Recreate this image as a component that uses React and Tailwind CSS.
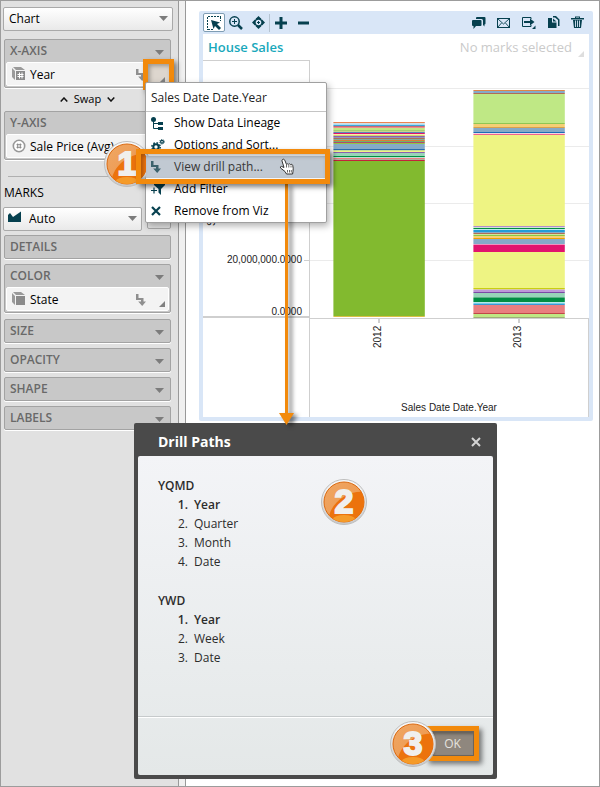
import React from 'react';

const INK = '#06404f';

function Caret({ className = '' }) {
  return (
    <svg className={`pointer-events-none ${className}`} width="9" height="5" viewBox="0 0 9 5" aria-hidden="true">
      <path d="M0 0h9L4.5 5z" fill="#7c7c7c" />
    </svg>
  );
}

function Corner({ className = '', fill = '#808080' }) {
  return (
    <svg className={className} width="6" height="6" viewBox="0 0 6 6" aria-hidden="true">
      <path d="M6 0v6H0z" fill={fill} />
    </svg>
  );
}

function CubeIcon({ hash }) {
  return (
    <svg width="14" height="14" viewBox="0 0 14 14" aria-hidden="true">
      <path d="M0 1l3 3v9L0 10zM1 0h8l4 3H4z" fill="#9a9a9a" />
      <rect x="4" y="4" width="9" height="9" fill="#8b8b8b" />
      {hash && <path d="M7.500 5.500v6M10 5.500v6M5.500 7.500h6M5.500 9.500h6" stroke="#fff" strokeWidth="1" />}
    </svg>
  );
}

function DrillIcon({ color = '#8f8f8f' }) {
  return (
    <svg width="10" height="12" viewBox="0 0 10 12" aria-hidden="true">
      <path d="M0 0h2.500v4H7.500v3.500H10L6.200 12 2.200 7.500H5v-1.500H0z" fill={color} />
    </svg>
  );
}

function Panel({ title, caret = true, children }) {
  return (
    <section className="rounded-xs border border-[#a3a3a3] bg-[#c8c8c8] shadow-[0_1px_0_#fff]">
      <header className="flex h-[22px] items-center justify-between pr-1.5 pl-[5px] text-[12px] leading-[22px] font-semibold text-[#696969]">
        <h2 className="text-[12px] font-semibold">{title}</h2>
        {caret && <Caret className="mt-0.5" />}
      </header>
      {children}
    </section>
  );
}

function Pill({ icon, label, drill }) {
  return (
    <div className="relative mx-px mb-px flex h-6 items-center rounded-xs border border-white bg-[#f3f3f3] pl-[5px]">
      <span className="flex w-[18px] justify-start">{icon}</span>
      <span className="pt-px text-[12px] whitespace-nowrap text-black">{label}</span>
      {drill && (
        <span className="absolute top-1.5 right-[22px]">
          <DrillIcon />
        </span>
      )}
      <Corner className="absolute right-[3px] bottom-[3px]" />
    </div>
  );
}

function Picker({ label, value, icon, className = '' }) {
  return (
    <div className={`relative h-6 ${className}`}>
      <select
        aria-label={label}
        className={`h-full w-full appearance-none rounded-xs border border-[#a9a9a9] bg-linear-to-b from-white to-[#e9e9e9] text-[12px] text-black ${icon ? 'pl-[25px]' : 'pl-[5px]'}`}
      >
        <option>{value}</option>
      </select>
      {icon && <span className="pointer-events-none absolute top-1.5 left-[5px]">{icon}</span>}
      <Caret className="absolute top-[11px] right-[5px]" />
    </div>
  );
}

function Badge({ n, className }) {
  const id = `badge${n}`;
  return (
    <svg className={`absolute ${className}`} width="48" height="48" viewBox="0 0 48 48" role="img" aria-label={`Step ${n}`}>
      <defs>
        <linearGradient id={`${id}a`} x1="0" y1="0" x2="0" y2="1">
          <stop offset="0" stopColor="#fafafa" />
          <stop offset="1" stopColor="#c9c9c9" />
        </linearGradient>
        <linearGradient id={`${id}b`} x1="0" y1="0" x2="1" y2="1">
          <stop offset="0" stopColor="#efa765" />
          <stop offset="1" stopColor="#ee9448" />
        </linearGradient>
        <clipPath id={`${id}c`}>
          <circle cx="24" cy="24" r="20" />
        </clipPath>
      </defs>
      <circle cx="24" cy="24" r="22.500" fill={`url(#${id}a)`} stroke="#bdbdbd" strokeWidth="1" />
      <circle cx="24" cy="24" r="20" fill={`url(#${id}b)`} stroke="#dc6a10" strokeWidth="1" />
      <g clipPath={`url(#${id}c)`}>
        <path d="M45 14C30 12 13 22 9 38l6 8h30z" fill="#ec730d" />
        <ellipse cx="24" cy="41" rx="11" ry="4" fill="#f8a833" opacity=".75" />
      </g>
      <text x="25" y="36" textAnchor="middle" fontFamily="'Liberation Sans', sans-serif" fontWeight="700" fontSize="34" fill="#9b4d10" opacity=".4">{n}</text>
      <text x="24" y="35" textAnchor="middle" fontFamily="'Liberation Sans', sans-serif" fontWeight="700" fontSize="34" fill="#f0efed" stroke="#f0efed" strokeWidth="2">{n}</text>
    </svg>
  );
}

function ToolButton({ label, children, className = '' }) {
  return (
    <button type="button" aria-label={label} className={`flex items-center justify-center ${className}`}>
      {children}
    </button>
  );
}

function Toolbar() {
  return (
    <div className="flex h-[23px] items-center justify-between">
      <div className="flex items-center">
        <ToolButton label="Select" className="h-[19px] w-[22px] rounded-xs border border-[#7f9db4] bg-white">
          <svg width="14" height="14" viewBox="0 0 14 14">
            <path d="M1 .500h13M.500 1v13M1 13.500h6M13.500 1v4" fill="none" stroke={INK} strokeDasharray="2 1" />
            <path d="M4 4l9 2.500-3 1.500 4 4-2 2-4-4-1.500 3z" fill={INK} />
          </svg>
        </ToolButton>
        <ToolButton label="Zoom in" className="w-[22px]">
          <svg width="14" height="14" viewBox="0 0 14 14" fill="none" stroke={INK}>
            <circle cx="5.500" cy="5.500" r="4.700" strokeWidth="1.500" />
            <path d="M3 5.500h5M5.500 3v5" />
            <path d="M9 9l4 4" strokeWidth="2.500" />
          </svg>
        </ToolButton>
        <ToolButton label="Fit" className="w-[22px]">
          <svg width="13" height="13" viewBox="0 0 13 13">
            <path d="M6.500 0L9.500 3h-6zM6.500 13l-3-3h6zM0 6.500l3-3v6zM13 6.500l-3 3v-6z" fill={INK} />
            <circle cx="6.500" cy="6.500" r="3.600" fill="none" stroke={INK} strokeWidth="1.600" />
            <path d="M5 6.500h3M6.500 5v3" stroke={INK} />
          </svg>
        </ToolButton>
        <span className="h-[18px] w-px bg-[#b5c3d1]" />
        <ToolButton label="Increase" className="w-[22px]">
          <svg width="12" height="12" viewBox="0 0 12 12"><path d="M4.500 0h3v4.500H12v3H7.500V12h-3V7.500H0v-3h4.500z" fill={INK} /></svg>
        </ToolButton>
        <ToolButton label="Decrease" className="w-[22px]">
          <svg width="11" height="12" viewBox="0 0 11 12"><path d="M0 4.500h11v3H0z" fill={INK} /></svg>
        </ToolButton>
      </div>
      <div className="flex items-center">
        <ToolButton label="Comments" className="w-[25px]">
          <svg width="14" height="12" viewBox="0 0 14 12">
            <path d="M5 0h7.500q1 0 1 1v5.500q0 1-1 1v2L11 8V3.500q0-1.500-1.500-1.500H4V1q0-1 1-1z" fill={INK} />
            <path d="M1 3h7.500q1 0 1 1v4q0 1-1 1H4L1.500 12V9H1Q0 9 0 8V4q0-1 1-1z" fill={INK} />
          </svg>
        </ToolButton>
        <ToolButton label="Mail" className="w-[25px]">
          <svg width="13" height="10" viewBox="0 0 13 10" fill="none" stroke={INK}>
            <rect x=".500" y=".500" width="12" height="9" />
            <path d="M1 1l5.500 5L12 1M1 9l3.500-4M12 9L8.500 5" strokeWidth=".9" />
          </svg>
        </ToolButton>
        <ToolButton label="Export" className="w-[25px]">
          <svg width="14" height="13" viewBox="0 0 14 13">
            <path d="M9 3V1.500H.500v9H9V9" fill="none" stroke={INK} />
            <path d="M2 5h6V2.500L12.500 6 8 9.500V7H2zM13.500 9.500V13H10z" fill={INK} />
          </svg>
        </ToolButton>
        <ToolButton label="Duplicate" className="w-[25px]">
          <svg width="12" height="13" viewBox="0 0 12 13">
            <path d="M5 0h3l3.500 3.500V10H10V4L7 1.500H5z" fill={INK} />
            <path d="M0 2h4v4.500h4.500V12H0zM5 2.500l3.500 3H5z" fill={INK} />
          </svg>
        </ToolButton>
        <ToolButton label="Delete" className="w-[23px]">
          <svg width="13" height="13" viewBox="0 0 13 13">
            <path d="M0 2h4V.500h5V2h4v1.500H0zM5 1.500V2h3v-.500z" fill={INK} fillRule="evenodd" />
            <path d="M2 4h9l-1 8H3z" fill={INK} />
            <path d="M4.500 4.500v6.500M6.500 4.500v6.500M8.500 4.500v6.500" stroke="#d9e6f7" strokeWidth=".9" />
          </svg>
        </ToolButton>
      </div>
    </div>
  );
}

/* Each entry: [top, height, colour] of one stacked segment. */
const BAR_2012 = [
  [122, 1, '#ec8350'], [123, 1, '#d3dfe6'], [124, 1, '#a9dff2'], [125, 1, '#3fa5dc'], [126, 1, '#c76a72'],
  [127, 1, '#ee8d8e'], [128, 2, '#bfe885'], [130, 1, '#a3cf72'], [131, 1, '#c9d38c'], [132, 1, '#5a86b8'],
  [133, 1, '#e1146e'], [134, 1, '#fbe9b0'], [135, 1, '#d3d46a'], [136, 1, '#8f62ad'], [137, 1, '#8d99b8'],
  [138, 1, '#b26c54'], [139, 1, '#7fae9c'], [140, 1, '#d97f35'], [141, 1, '#6fb06f'], [142, 1, '#b24a72'],
  [143, 1, '#93c740'], [144, 5, '#85aac8'], [149, 1, '#2a6eae'], [150, 1, '#c5dc9a'], [151, 1, '#eef483'],
  [152, 1, '#8a5fb0'], [153, 3, '#98d4b8'], [156, 1, '#008d42'], [157, 1, '#b9e3d0'], [158, 1, '#e97e80'],
  [159, 1, '#b0b0a0'], [160, 1, '#c3233b'], [161, 155, '#82ba2f'], [316, 1, '#d9bf45'],
];

const BAR_2013 = [
  [90, 1, '#df8648'], [91, 2, '#85aac8'], [93, 1, '#b26c54'], [94, 29, '#bfe885'], [123, 1, '#8fc653'],
  [124, 3, '#f5cf75'], [127, 1, '#d9a14c'], [128, 4, '#85aac8'], [132, 1, '#1a6fb5'], [133, 1, '#f6d5e0'],
  [134, 1, '#f0628e'], [135, 91, '#eef483'], [226, 1, '#b48cd0'], [227, 1, '#cfe6d0'], [228, 1, '#008d42'],
  [229, 1, '#bfeaea'], [230, 2, '#219dd8'], [232, 1, '#85aac8'], [233, 1, '#b26c54'], [234, 1, '#cfe6a0'],
  [235, 1, '#8cc840'], [236, 2, '#f5cf75'], [238, 1, '#f0a000'], [239, 5, '#85aac8'], [244, 1, '#ef93c0'],
  [245, 7, '#e1146e'], [252, 36, '#eef483'], [288, 1, '#c9cf10'], [289, 1, '#d8c6a8'], [290, 2, '#be98d8'],
  [292, 1, '#7c4aa4'], [293, 4, '#98d4b8'], [297, 1, '#5bb384'], [298, 4, '#008d42'], [302, 1, '#b9e8e8'],
  [303, 1, '#74cdea'], [304, 1, '#3b98d4'], [305, 8, '#e97e80'], [313, 1, '#c04848'], [314, 3, '#bfe885'],
  [317, 1, '#9fae78'],
];

function Chart() {
  return (
    <svg className="block w-full" viewBox="203 61 386 356" role="img" aria-label="House Sales" fontFamily="'Liberation Sans', Arial, sans-serif" fontSize="10" fill="#222">
      <g fill="#ebebeb">
        <rect x="310" y="88" width="279" height="1" />
        <rect x="310" y="146" width="279" height="1" />
        <rect x="310" y="203" width="279" height="1" />
        <rect x="310" y="260" width="279" height="1" />
      </g>
      <g fill="#cfcfcf">
        <rect x="309" y="61" width="1" height="356" />
        <rect x="203" y="316" width="106" height="2" />
        <rect x="309" y="318" width="280" height="1" />
        <rect x="588" y="318" width="1" height="99" />
        <rect x="304" y="203" width="5" height="1" />
        <rect x="304" y="260" width="5" height="1" />
        <rect x="378" y="318" width="2" height="5" />
        <rect x="518" y="318" width="2" height="5" />
      </g>
      <g>
        {BAR_2012.map(([y, h, c]) => (
          <rect key={y} x="333.400" y={y} width="91.400" height={h} fill={c} />
        ))}
        {BAR_2013.map(([y, h, c]) => (
          <rect key={y} x="473.400" y={y} width="91.400" height={h} fill={c} />
        ))}
      </g>
      <text x="302" y="263" textAnchor="end">20,000,000.0000</text>
      <text x="302" y="315" textAnchor="end">0.0000</text>
      <text transform="translate(215 226) rotate(-90)">Sale Price (Avg)</text>
      <text transform="translate(381 348) rotate(-90)">2012</text>
      <text transform="translate(521 348) rotate(-90)">2013</text>
      <text x="449" y="411" textAnchor="middle">Sales Date Date.Year</text>
    </svg>
  );
}

const LineageIcon = () => (
  <svg width="12" height="13" viewBox="0 0 12 13">
    <circle cx="2.500" cy="2.500" r="2.500" fill={INK} />
    <path d="M2.500 4v7.500H8M2.500 6.500H8" fill="none" stroke={INK} />
    <path d="M7 5h5v3H7zM7 10h5v3H7z" fill={INK} />
  </svg>
);

const GearsIcon = () => (
  <svg width="14" height="13" viewBox="0 0 14 13" fill="none" stroke={INK}>
    <circle cx="5" cy="8" r="2.700" strokeWidth="2" />
    <circle cx="5" cy="8" r="4.200" strokeWidth="1.500" strokeDasharray="1.650 1.650" />
    <circle cx="11" cy="2.700" r="1.400" strokeWidth="1.200" />
    <circle cx="11" cy="2.700" r="2.300" strokeDasharray=".9 .9" />
  </svg>
);

const FilterIcon = () => (
  <svg width="14" height="12" viewBox="0 0 14 12">
    <path d="M3 0h11v2l-4 4v6L7.500 9.500V6L3 2z" fill={INK} />
    <path d="M0 7.500h6M3 4.500v6" stroke={INK} strokeWidth="1.200" />
  </svg>
);

const RemoveIcon = () => (
  <svg width="10" height="10" viewBox="0 0 10 10">
    <path d="M1 1l8 8M9 1L1 9" stroke={INK} strokeWidth="2.200" />
  </svg>
);

const HandIcon = () => (
  <svg className="absolute top-0.5 left-[133px]" width="16" height="18" viewBox="0 0 16 18">
    <path
      d="M3.500 1.500q1.300-1 2.300.7l1.700 4.300q.8-1.200 2-.2 1.200-1 2 .2 1.600-.9 2.200.8.900 3 .3 6l-.4 2.700H7.500L6 13.500 1.500 10q-.6-1.500 1-1.600L5 9.500 3 3q-.2-1 .500-1.500z"
      fill="#fff" stroke="#333" strokeWidth="1"
    />
    <path d="M7.500 7v2.500M9.800 7v2.500M12 7.500v2M8.500 12v2.500M10.500 12v2.500M12.300 12v2.500" stroke="#444" strokeWidth=".8" />
  </svg>
);

const MENU = [
  { label: 'Show Data Lineage', icon: <LineageIcon /> },
  { label: 'Options and Sort...', icon: <GearsIcon /> },
  { label: 'View drill path...', icon: <DrillIcon color="#3c626d" />, active: true },
  { label: 'Add Filter', icon: <FilterIcon /> },
  { label: 'Remove from Viz', icon: <RemoveIcon /> },
];

function ContextMenu() {
  return (
    <div className="absolute top-[81px] left-[144px] w-[182px] rounded-xs border border-[#a0a0a0] bg-white shadow-[2px_3px_7px_rgba(0,0,0,0.3)]">
      <p className="h-[29px] border-b border-[#c4c4c4] pl-[5px] text-[12px] leading-[29px] text-[#222]">Sales Date Date.Year</p>
      <ul>
        {MENU.map(({ label, icon, active }) => (
          <li key={label} className={`relative h-[22px] ${active ? 'z-10 bg-[#c1c9d2]' : ''}`}>
            <button type="button" className={`flex h-full w-full items-center pl-[5px] text-left text-[12px] ${active ? 'text-[#383838]' : 'text-black'}`}>
              <span className="flex w-[23px] justify-start">{icon}</span>
              {label}
            </button>
            {active && (
              <>
                <span className="absolute -top-[7px] -right-[4px] -bottom-[6px] -left-[10px] border-5 border-[#f28a0c] shadow-[3px_3px_5px_rgba(0,0,0,0.5),inset_2px_2px_4px_rgba(0,0,0,0.3)]" />
                <HandIcon />
              </>
            )}
          </li>
        ))}
      </ul>
    </div>
  );
}

function DrillGroup({ title, items }) {
  return (
    <section className="mb-5">
      <h3 className="text-[12px] leading-[19px] font-semibold">{title}</h3>
      <ol>
        {items.map((item, i) => (
          <li key={item} className={`flex text-[12px] leading-[19px] ${i === 0 ? 'font-semibold' : ''}`}>
            <span className="w-9 pr-1.5 text-right">{i + 1}.</span>
            {item}
          </li>
        ))}
      </ol>
    </section>
  );
}

function DrillDialog() {
  return (
    <div role="dialog" aria-label="Drill Paths" className="absolute top-[422px] left-[133px] w-[363px] rounded-xs bg-[#4a4a4a] px-1 pb-1">
      <header className="flex h-[33px] items-center justify-between pr-3 pl-5 pt-1">
        <h2 className="text-[14px] font-bold text-white">Drill Paths</h2>
        <button type="button" aria-label="Close">
          <svg width="10" height="10" viewBox="0 0 10 10"><path d="M1 1l8 8M9 1L1 9" stroke="#d4d4d4" strokeWidth="2" /></svg>
        </button>
      </header>
      <div className="rounded-xs bg-linear-to-b from-[#f3f4f7] to-[#e4e8e8] text-[#2c2c2c]">
        <div className="h-[261px] border-b border-[#c6cacb] px-5 pt-5">
          <DrillGroup title="YQMD" items={['Year', 'Quarter', 'Month', 'Date']} />
          <DrillGroup title="YWD" items={['Year', 'Week', 'Date']} />
        </div>
        <footer className="flex h-[58px] items-start justify-end border-t border-white pt-2 pr-3.5">
          <span className="border-5 border-[#f28a0c] shadow-[3px_3px_5px_rgba(0,0,0,0.5)]">
            <button type="button" className="block h-[25px] w-[43px] border border-[#6b645c] bg-[#8f877e] text-[12px] text-[#e6e3df] shadow-[inset_2px_2px_3px_rgba(0,0,0,0.3)]">
              OK
            </button>
          </span>
        </footer>
      </div>
      <Badge n={2} className="top-[55px] left-[186px]" />
      <Badge n={3} className="top-[297px] left-[255px]" />
    </div>
  );
}

function Sidebar() {
  return (
    <aside className="w-[178px] shrink-0 border-r border-[#999] bg-[#e1e1e1] pt-1 pr-[7px] pl-0.5">
      <Picker label="Visualization type" value="Chart" className="mr-[-2px]" />
      <div className="mt-2.5 ml-px">
        <Panel title="X-AXIS">
          <Pill icon={<CubeIcon hash />} label="Year" drill />
        </Panel>
        <button type="button" className="flex h-[23px] w-full items-center justify-center gap-1.5 text-[11px] text-black">
          <svg width="8" height="5" viewBox="0 0 8 5"><path d="M.700 4.500L4 1l3.300 3.500" fill="none" stroke="#111" strokeWidth="1.500" /></svg>
          Swap
          <svg width="8" height="5" viewBox="0 0 8 5"><path d="M.700.500L4 4 7.300.500" fill="none" stroke="#111" strokeWidth="1.500" /></svg>
        </button>
        <Panel title="Y-AXIS">
          <Pill
            icon={
              <svg width="14" height="14" viewBox="0 0 14 14">
                <circle cx="7" cy="7" r="5.700" fill="#fff" stroke="#999" strokeWidth="1.600" />
                <path d="M5.700 4.500v5M8.300 4.500v5M4.500 5.700h5M4.500 8.300h5" stroke="#888" />
              </svg>
            }
            label="Sale Price (Avg)"
          />
        </Panel>
        <hr className="mt-4 mr-1 ml-1 border-t border-[#b0b0b0]" />
        <h2 className="mt-1.5 h-[22px] text-[12px] leading-[19px] text-black">MARKS</h2>
      </div>
      <div className="flex gap-[5px]">
        <Picker
          label="Mark type"
          value="Auto"
          className="w-[139px]"
          icon={<svg width="14" height="12" viewBox="0 0 14 12"><path d="M0 4l2-2 3 4 8-5.500V11H0z" fill={INK} /></svg>}
        />
        <button type="button" aria-label="Settings" className="flex h-6 w-6 items-center justify-center rounded-xs border border-[#a9a9a9] bg-[#e4e4e4]">
          <svg width="12" height="12" viewBox="0 0 12 12" fill="none" stroke="#888">
            <circle cx="6" cy="6" r="3" strokeWidth="2" />
            <circle cx="6" cy="6" r="5" strokeDasharray="2 1.900" strokeWidth="1.500" />
          </svg>
        </button>
      </div>
      <div className="mt-1.5 ml-px flex flex-col gap-[5px]">
        <Panel title="DETAILS" caret={false} />
        <Panel title="COLOR">
          <Pill icon={<CubeIcon />} label="State" drill />
        </Panel>
        <div className="mt-px flex flex-col gap-[5px]">
          <Panel title="SIZE" />
          <Panel title="OPACITY" />
          <Panel title="SHAPE" />
          <Panel title="LABELS" />
        </div>
      </div>
    </aside>
  );
}

export default function App() {
  return (
    <div className="relative flex min-h-screen border border-[#9c9c9c] bg-white font-['Open_Sans','Noto_Sans',sans-serif]">
      <Sidebar />
      <div className="w-[7px] shrink-0 border-r border-[#999] bg-[#f0f0f0]" />
      <main className="min-w-0 flex-1 pt-2.5 pr-1.5 pl-[13px]">
        <div className="rounded-xs bg-[#d9e6f7] px-1 pb-1">
          <Toolbar />
          <div className="bg-white">
            <div className="flex h-[27px] items-center justify-between pl-[5px]">
              <h1 className="text-[13px] font-semibold text-[#18a8bb]">House Sales</h1>
              <p className="flex items-end gap-1.5 pr-[5px] text-[13px] text-[#cacaca]">
                No marks selected
                <Corner fill="#dedede" />
              </p>
            </div>
            <div className="relative">
              <span className="absolute -top-px left-0 h-px w-[107px] bg-[#cfcfcf]" />
              <Chart />
            </div>
          </div>
        </div>
      </main>

      <span className="absolute top-[58px] left-[142px] h-[31px] w-[31px] border-5 border-[#f28a0c] bg-[#ddd6ce] shadow-[3px_3px_5px_rgba(0,0,0,0.45),inset_2px_2px_4px_rgba(0,0,0,0.3)]">
        <Corner className="absolute right-1 bottom-0.5" />
      </span>
      <ContextMenu />
      <Badge n={1} className="top-[139px] left-[102px]" />
      <DrillDialog />
      <svg className="absolute top-[183px] left-[278px] drop-shadow-[4px_2px_2px_rgba(0,0,0,0.5)]" width="16" height="242" viewBox="0 0 16 242" aria-hidden="true">
        <path d="M6 0h3v229h6L7.500 241 0 229h6z" fill="#f28a0c" />
      </svg>
    </div>
  );
}
